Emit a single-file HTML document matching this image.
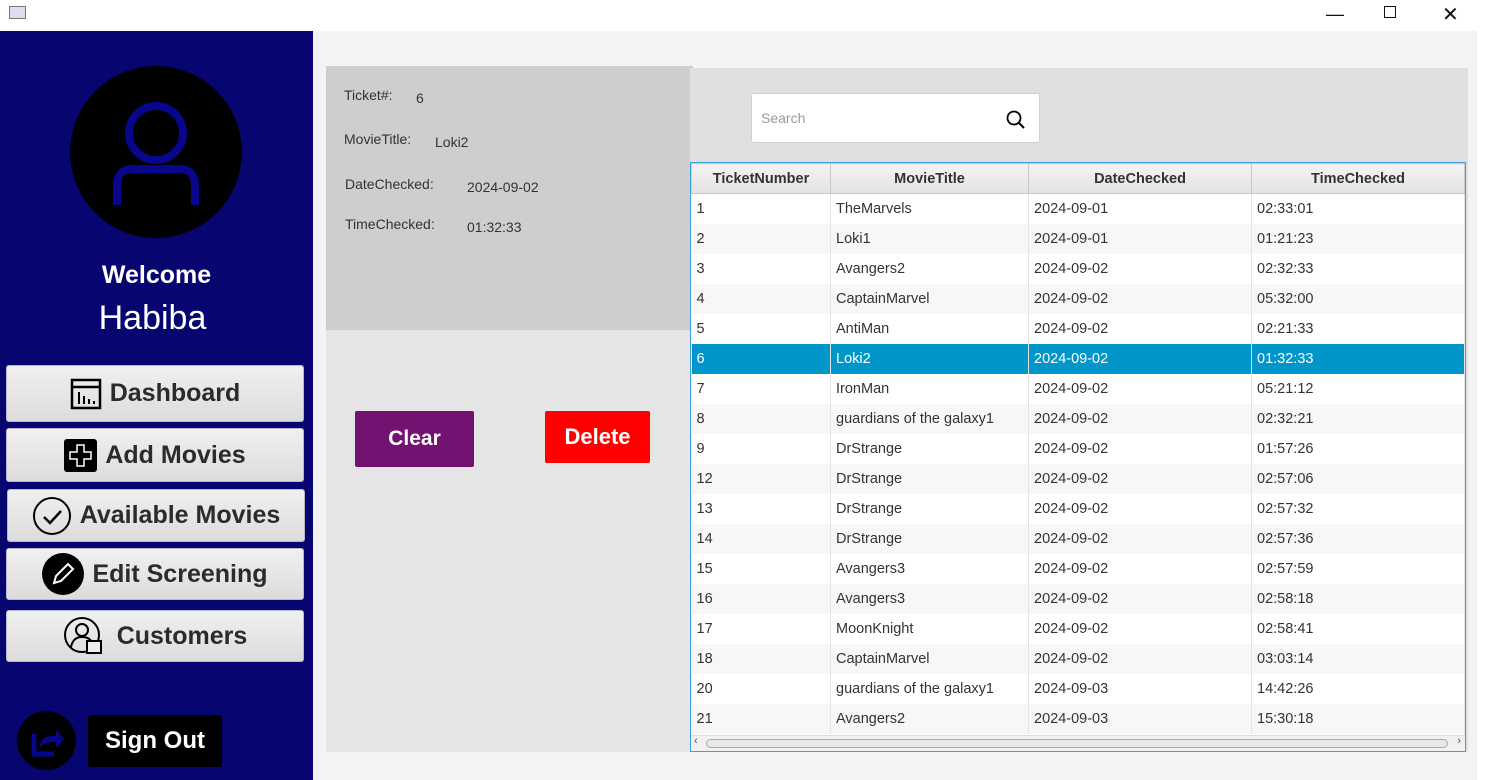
<!DOCTYPE html>
<html><head><meta charset="utf-8"><style>
*{margin:0;padding:0;box-sizing:border-box}
body{width:1485px;height:780px;overflow:hidden;background:#f3f3f3;font-family:"Liberation Sans",sans-serif;position:relative}
.abs{position:absolute}
.tb{left:0;top:0;width:1485px;height:31px;background:#fff}
.side{left:0;top:31px;width:313px;height:749px;background:#070570}
.nb{position:absolute;left:6px;width:298px;background:linear-gradient(#f0f0f0,#dcdcdc);border:1px solid #b8b8c8;border-radius:3px;font-weight:bold;font-size:25px;color:#2b2b2b;display:flex;align-items:center;justify-content:center;gap:8px}
.lbl{position:absolute;font-size:14px;color:#333}
table{border-collapse:collapse;font-size:14.5px;color:#333}
td,th{height:30px;padding:0 5px;border-right:1px solid #e4e4e4;white-space:nowrap}
th{background:linear-gradient(#f4f4f4,#e2e2e2);font-weight:bold;border:1px solid #c8c8c8;height:30px}
tr:nth-child(odd) td{background:#f7f7f7}
tr:nth-child(even) td{background:#fff}
tr.sel td{background:#0096c9 !important;color:#fff}
</style></head><body>
<div class="abs tb">
<div class="abs" style="left:9px;top:6px;width:17px;height:13px;border:1px solid #777;background:#dde"></div>
<div class="abs" style="left:1326px;top:4px;font-size:18px;color:#111">—</div>
<div class="abs" style="left:1384px;top:6px;width:12px;height:12px;border:1.5px solid #111"></div>
<div class="abs" style="left:1442px;top:2px;font-size:20px;color:#111">✕</div>
</div>
<div class="abs" style="left:1477px;top:31px;width:8px;height:749px;background:#fff"></div>
<div class="abs side">
<div class="abs" style="left:70px;top:35px;width:172px;height:172px;border-radius:50%;background:#000"></div>
<svg class="abs" style="left:105px;top:70px" width="100" height="110" viewBox="0 0 100 110"><circle cx="51" cy="32" r="27" fill="none" stroke="#08068a" stroke-width="8"/><path d="M12 104 V84 Q12 68 28 68 H74 Q90 68 90 84 V104" fill="none" stroke="#08068a" stroke-width="8"/></svg>
<div class="abs" style="left:0;width:313px;top:230px;text-align:center;color:#fff;font-weight:bold;font-size:25px">Welcome</div>
<div class="abs" style="left:0;width:305px;top:268px;text-align:center;color:#fff;font-size:34px">Habiba</div>
</div>
<div class="nb" style="top:365px;height:57px"><svg width="32" height="32"><rect x="2" y="2" width="28" height="28" fill="none" stroke="#000" stroke-width="2.5"/><line x1="2" y1="9" x2="30" y2="9" stroke="#000" stroke-width="2.5"/><path d="M9 14v12M14 18v8M19 21v5M24 23v3" stroke="#000" stroke-width="2"/></svg>Dashboard</div>
<div class="nb" style="top:428px;height:54px"><svg width="33" height="33"><rect width="33" height="33" rx="3" fill="#000"/><path d="M13 6h7v7h7v7h-7v7h-7v-7h-7v-7h7z" fill="none" stroke="#fff" stroke-width="1.5"/></svg>Add Movies</div>
<div class="nb" style="top:489px;height:53px;left:7px"><svg width="40" height="40"><circle cx="20" cy="20" r="18" fill="none" stroke="#000" stroke-width="2"/><path d="M12 21l6 6 11-12" fill="none" stroke="#000" stroke-width="2.5"/></svg>Available Movies</div>
<div class="nb" style="top:548px;height:52px"><svg width="42" height="42"><circle cx="21" cy="21" r="21" fill="#000"/><path d="M12 30l2-7 12-12 5 5-12 12z" fill="none" stroke="#fff" stroke-width="2"/></svg>Edit Screening</div>
<div class="nb" style="top:610px;height:52px;gap:14px"><svg width="40" height="40"><circle cx="19" cy="19" r="17" fill="none" stroke="#000" stroke-width="2"/><circle cx="19" cy="14" r="6" fill="none" stroke="#000" stroke-width="2"/><path d="M8 31q2-10 11-10 8 0 10 6" fill="none" stroke="#000" stroke-width="2"/><rect x="24" y="25" width="14" height="12" fill="#eee" stroke="#000" stroke-width="2"/></svg>Customers</div>
<div class="abs" style="left:17px;top:711px;width:59px;height:59px;border-radius:50%;background:#000"></div>
<svg class="abs" style="left:30px;top:724px" width="34" height="34"><path d="M4 10v20h20" fill="none" stroke="#08068a" stroke-width="5"/><path d="M10 24q0-12 12-12h4v-6l8 9-8 9v-6h-4q-8 0-12 6z" fill="#08068a"/></svg>
<div class="abs" style="left:88px;top:715px;width:134px;height:52px;background:#000;border-radius:3px;color:#fff;font-weight:bold;font-size:24px;display:flex;align-items:center;justify-content:center">Sign Out</div>

<div class="abs" style="left:326px;top:66px;width:367px;height:264px;background:#cfcecd"></div>
<div class="abs" style="left:326px;top:330px;width:364px;height:422px;background:#e5e5e5"></div>
<div class="lbl" style="left:344px;top:87px">Ticket#:</div><div class="lbl" style="left:416px;top:90px">6</div>
<div class="lbl" style="left:344px;top:131px">MovieTitle:</div><div class="lbl" style="left:435px;top:134px">Loki2</div>
<div class="lbl" style="left:345px;top:176px">DateChecked:</div><div class="lbl" style="left:467px;top:179px">2024-09-02</div>
<div class="lbl" style="left:345px;top:216px">TimeChecked:</div><div class="lbl" style="left:467px;top:219px">01:32:33</div>
<div class="abs" style="left:355px;top:411px;width:119px;height:56px;background:#741271;border-radius:2px;color:#fff;font-weight:bold;font-size:21px;display:flex;align-items:center;justify-content:center">Clear</div>
<div class="abs" style="left:545px;top:411px;width:105px;height:52px;background:#fe0000;border-radius:2px;color:#fff;font-weight:bold;font-size:22px;display:flex;align-items:center;justify-content:center">Delete</div>

<div class="abs" style="left:690px;top:68px;width:778px;height:684px;background:#e0e0e2"></div>
<div class="abs" style="left:751px;top:93px;width:289px;height:50px;background:#fff;border:1px solid #d0d0d0;border-radius:3px"><span style="position:absolute;left:9px;top:16px;font-size:14px;color:#999">Search</span>
<svg style="position:absolute;left:254px;top:16px" width="20" height="20"><circle cx="8" cy="8" r="6.5" fill="none" stroke="#000" stroke-width="1.8"/><path d="M13 13l5 5" stroke="#000" stroke-width="2"/></svg></div>
<div class="abs" style="left:690px;top:162px;width:776px;height:590px;border:1px solid #3aa3d8;background:#fff;overflow:hidden">
<table style="width:774px">
<tr><th style="width:139px">TicketNumber</th><th style="width:198px">MovieTitle</th><th style="width:223px">DateChecked</th><th>TimeChecked</th></tr>
<tr><td>1</td><td>TheMarvels</td><td>2024-09-01</td><td>02:33:01</td></tr>
<tr><td>2</td><td>Loki1</td><td>2024-09-01</td><td>01:21:23</td></tr>
<tr><td>3</td><td>Avangers2</td><td>2024-09-02</td><td>02:32:33</td></tr>
<tr><td>4</td><td>CaptainMarvel</td><td>2024-09-02</td><td>05:32:00</td></tr>
<tr><td>5</td><td>AntiMan</td><td>2024-09-02</td><td>02:21:33</td></tr>
<tr class="sel"><td>6</td><td>Loki2</td><td>2024-09-02</td><td>01:32:33</td></tr>
<tr><td>7</td><td>IronMan</td><td>2024-09-02</td><td>05:21:12</td></tr>
<tr><td>8</td><td>guardians of the galaxy1</td><td>2024-09-02</td><td>02:32:21</td></tr>
<tr><td>9</td><td>DrStrange</td><td>2024-09-02</td><td>01:57:26</td></tr>
<tr><td>12</td><td>DrStrange</td><td>2024-09-02</td><td>02:57:06</td></tr>
<tr><td>13</td><td>DrStrange</td><td>2024-09-02</td><td>02:57:32</td></tr>
<tr><td>14</td><td>DrStrange</td><td>2024-09-02</td><td>02:57:36</td></tr>
<tr><td>15</td><td>Avangers3</td><td>2024-09-02</td><td>02:57:59</td></tr>
<tr><td>16</td><td>Avangers3</td><td>2024-09-02</td><td>02:58:18</td></tr>
<tr><td>17</td><td>MoonKnight</td><td>2024-09-02</td><td>02:58:41</td></tr>
<tr><td>18</td><td>CaptainMarvel</td><td>2024-09-02</td><td>03:03:14</td></tr>
<tr><td>20</td><td>guardians of the galaxy1</td><td>2024-09-03</td><td>14:42:26</td></tr>
<tr><td>21</td><td>Avangers2</td><td>2024-09-03</td><td>15:30:18</td></tr>
</table>
<div style="position:absolute;left:0;top:572px;width:774px;height:16px;background:#f0f0f0;border-top:1px solid #ddd">
<div style="position:absolute;left:15px;top:3px;width:742px;height:9px;border:1px solid #aaa;border-radius:5px;background:#e8e8e8"></div>
<span style="position:absolute;left:3px;top:-1px;font-size:11px;color:#555">‹</span><span style="position:absolute;right:4px;top:-1px;font-size:11px;color:#555">›</span></div>
</div>
</body></html>
